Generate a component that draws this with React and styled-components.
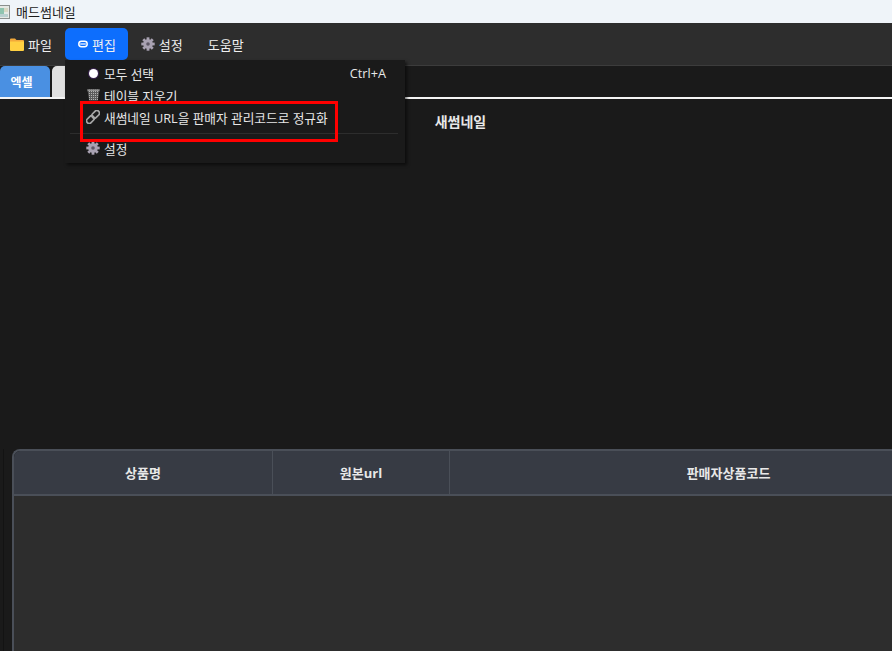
import styled, { createGlobalStyle } from "styled-components";

const GlobalStyle = createGlobalStyle`
	html, body {
		margin: 0;
		padding: 0;
		height: 100%;
		overflow: hidden;
		background: #1a1a1a;
	}
	* {
		box-sizing: border-box;
	}
`;

const fontStack = `"Open Sans", "Noto Sans CJK KR", sans-serif`;

const editItems = [
	{ label: "모두 선택", icon: "dot", shortcut: "Ctrl+A" },
	{ label: "테이블 지우기", icon: "trash" },
	{ label: "새썸네일 URL을 판매자 관리코드로 정규화", icon: "link", divider: true },
	{ label: "설정", icon: "gear" },
];

function GearIcon() {
	const teeth = [0, 45, 90, 135, 180, 225, 270, 315];
	return (
		<svg width="14" height="14" viewBox="0 0 14 14">
			{teeth.map((angle) => (
				<rect key={angle} x="5.6" y="0.3" width="2.8" height="3" fill="#a9a2b2" transform={`rotate(${angle} 7 7)`} />
			))}
			<circle cx="7" cy="7" r="4.8" fill="#a9a2b2" />
			<circle cx="7" cy="7" r="1.8" fill="#5e5866" />
		</svg>
	);
}

function BasketIcon() {
	return (
		<svg width="13" height="12" viewBox="0 0 13 12">
			<defs>
				<pattern id="mesh" width="2" height="2" patternUnits="userSpaceOnUse">
					<rect width="2" height="2" fill="#5c5c5c" />
					<rect width="1" height="1" fill="#b4b4b4" />
				</pattern>
			</defs>
			<path d="M0.5 0.5 H12.5 L10.8 11.5 H2.2 Z" fill="url(#mesh)" />
			<rect x="0.5" y="0.5" width="12" height="1.4" fill="#9a9a9a" />
		</svg>
	);
}

function LinkIcon() {
	return (
		<svg width="14" height="14" viewBox="0 0 14 14">
			<g fill="none" stroke="#a6a6a6" strokeWidth="1.7" transform="rotate(-45 7 7)">
				<rect x="-1" y="4.4" width="8.6" height="5.2" rx="2.6" />
				<rect x="6.4" y="4.4" width="8.6" height="5.2" rx="2.6" />
			</g>
		</svg>
	);
}

function PillIcon() {
	return (
		<svg width="10" height="8" viewBox="0 0 10 8">
			<rect x="0.8" y="1.3" width="8.4" height="5.4" rx="2.7" fill="#0d6efd" stroke="#fff" strokeWidth="1.5" />
			<rect x="2.2" y="3.4" width="5.6" height="1.2" fill="#fff" />
		</svg>
	);
}

function FolderIcon() {
	return (
		<svg width="14" height="13" viewBox="0 0 14 13">
			<path d="M0 1.5 Q0 0.5 1 0.5 H5 L6.5 2 H13 Q14 2 14 3 V4 H0 Z" fill="#f2a93b" />
			<path d="M0 3.5 H14 V12 Q14 13 13 13 H1 Q0 13 0 12 Z" fill="#ffd042" />
		</svg>
	);
}

function ItemIcon({ name }) {
	if (name === "dot") return <WhiteDot />;
	if (name === "trash") return <BasketIcon />;
	if (name === "link") return <LinkIcon />;
	return <GearIcon />;
}

export default function App() {
	return (
		<Page>
			<GlobalStyle />
			<TitleBar>
				<svg width="10" height="14" viewBox="0 0 10 14">
					<rect x="-2" y="0.5" width="11.5" height="13" fill="#e6e9e6" stroke="#8b8f8e" />
					<rect x="0" y="3" width="4" height="6" fill="#8fc4b0" />
					<rect x="4" y="3" width="4" height="4" fill="#d8d8c4" />
					<rect x="0" y="9" width="8" height="3" fill="#b9cfd0" />
				</svg>
				<AppTitle>매드썸네일</AppTitle>
			</TitleBar>

			<MenuBar>
				<MenuButton $first>
					<FolderIcon />
					파일
				</MenuButton>
				<MenuButton $active>
					<PillIcon />
					편집
				</MenuButton>
				<MenuButton>
					<GearIcon />
					설정
				</MenuButton>
				<MenuButton>도움말</MenuButton>

				<Dropdown>
					{editItems.map((item) => (
						<DropdownGroup key={item.label}>
							<DropdownItem>
								<IconSlot>
									<ItemIcon name={item.icon} />
								</IconSlot>
								<span>{item.label}</span>
								{item.shortcut ? <Shortcut>{item.shortcut}</Shortcut> : null}
							</DropdownItem>
							{item.divider ? <DropdownDivider /> : null}
						</DropdownGroup>
					))}
				</Dropdown>
				<Highlight />
			</MenuBar>

			<TabRow>
				<Tab $active>엑셀</Tab>
				<TabGap />
				<Tab />
			</TabRow>

			<Workspace>
				<PreviewHeading>새썸네일</PreviewHeading>
				<TableFrame>
					<DataTable>
						<TableHead>
							<HeadCell $width="258px">상품명</HeadCell>
							<HeadCell $width="177px">원본url</HeadCell>
							<HeadCell $width="558px">판매자상품코드</HeadCell>
						</TableHead>
						<TableBody />
					</DataTable>
				</TableFrame>
			</Workspace>
		</Page>
	);
}

const Page = styled.div`
	display: flex;
	flex-direction: column;
	width: 892px;
	height: 651px;
	overflow: hidden;
	font-family: ${fontStack};
	background: #1a1a1a;
`;

const TitleBar = styled.div`
	display: flex;
	align-items: center;
	gap: 6px;
	height: 23px;
	background: #eff4f9;
	flex-shrink: 0;
`;

const AppTitle = styled.span`
	font-size: 13px;
	color: #1a1a1a;
`;

const MenuBar = styled.div`
	position: relative;
	display: flex;
	align-items: flex-start;
	height: 43px;
	padding-top: 5px;
	background: #2d2d2d;
	border-bottom: 1px solid #3c3c3c;
	flex-shrink: 0;
`;

const MenuButton = styled.div`
	display: flex;
	align-items: center;
	gap: 4px;
	height: 32px;
	padding: 0 12px 0 ${(props) => (props.$first ? "10px" : "13px")};
	margin-right: ${(props) => (props.$first ? "1px" : "0")};
	border-radius: 5px;
	font-size: 13px;
	color: #f0f0f0;
	background: ${(props) => (props.$active ? "#0d6efd" : "transparent")};
`;

const Dropdown = styled.div`
	position: absolute;
	z-index: 5;
	top: 37px;
	left: 65px;
	width: 340px;
	height: 103px;
	padding-top: 2px;
	background: #1a1a1a;
	box-shadow: 2px 2px 3px rgba(0, 0, 0, 0.55);
`;

const DropdownGroup = styled.div`
	display: flex;
	flex-direction: column;
`;

const DropdownItem = styled.div`
	display: flex;
	align-items: center;
	height: 22px;
	padding: 0 19px 0 21px;
	font-size: 12.7px;
	color: #e8e8e8;
`;

const IconSlot = styled.span`
	display: flex;
	align-items: center;
	justify-content: center;
	width: 14px;
	margin-right: 4px;
`;

const WhiteDot = styled.span`
	width: 9px;
	height: 9px;
	border-radius: 50%;
	background: #fff;
	box-shadow: 0 0 0 1px #3a2350;
`;

const Shortcut = styled.span`
	margin-left: auto;
`;

const DropdownDivider = styled.div`
	height: 1px;
	margin: 5px 7px 3px 5px;
	background: #2d2d2d;
`;

const Highlight = styled.div`
	position: absolute;
	z-index: 6;
	top: 78px;
	left: 80px;
	width: 258px;
	height: 41px;
	border: 3px solid #ff0000;
`;

const TabRow = styled.div`
	display: flex;
	align-items: stretch;
	height: 33px;
	background: #1a1a1a;
	border-bottom: 2px solid #f4f4f4;
	flex-shrink: 0;
`;

const Tab = styled.div`
	display: flex;
	align-items: center;
	justify-content: center;
	width: ${(props) => (props.$active ? "50px" : "90px")};
	padding-right: ${(props) => (props.$active ? "7px" : "0")};
	font-size: 12px;
	font-weight: bold;
	color: #fff;
	border-radius: 5px 5px 0 0;
	background: ${(props) => (props.$active ? "#4a90e2" : "#e0e0e0")};
`;

const TabGap = styled.div`
	position: relative;
	width: 2px;

	&::before {
		content: "";
		position: absolute;
		top: 0;
		left: -2px;
		border-left: 3px solid transparent;
		border-right: 3px solid transparent;
		border-top: 4px solid #1a1a1a;
	}
`;

const Workspace = styled.div`
	display: flex;
	flex-direction: column;
	flex: 1;
	min-height: 0;
	background: #1a1a1a;
`;

const PreviewHeading = styled.div`
	height: 350px;
	padding-top: 15px;
	text-align: center;
	font-size: 14px;
	font-weight: bold;
	line-height: 16px;
	color: #e8e8e8;
	width: 921px;
	flex-shrink: 0;
`;

const TableFrame = styled.div`
	display: flex;
	flex: 1;
	margin-left: 3px;
	padding-left: 8px;
	border-left: 1px solid #131313;
`;

const DataTable = styled.div`
	display: flex;
	flex-direction: column;
	flex-shrink: 0;
	width: 995px;
	border: 2px solid #4a4f58;
	border-right: none;
	border-bottom: none;
	border-radius: 8px 0 0 0;
	overflow: hidden;
`;

const TableHead = styled.div`
	display: flex;
	height: 45px;
	background: #373b44;
	border-bottom: 2px solid #4a4f58;
	flex-shrink: 0;
`;

const HeadCell = styled.div`
	display: flex;
	align-items: center;
	justify-content: center;
	width: ${(props) => props.$width};
	flex-shrink: 0;
	font-size: 13px;
	font-weight: bold;
	color: #e8e8e8;
	border-left: 1px solid #4a4f58;

	&:first-child {
		border-left: none;
	}
`;

const TableBody = styled.div`
	flex: 1;
	background: #2d2d2d;
`;
